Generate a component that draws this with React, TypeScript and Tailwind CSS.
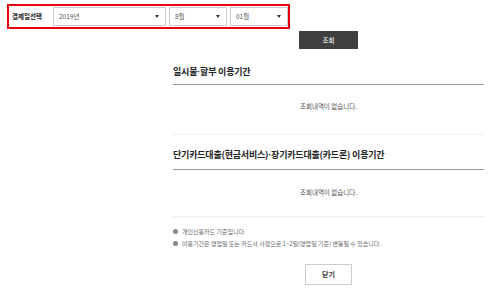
export default function App() {
    const font = { fontFamily: '"Noto Sans CJK KR", "Noto Sans", sans-serif' }
    const dot = { fontFamily: '"Liberation Sans", sans-serif' }
    return (
        <div className="w-[500px] h-[301px] bg-white overflow-hidden text-[#333]" style={font}>
            {/* 결제일 선택 */}
            <div className="pt-[4px] pl-[7px]">
                <div className="w-[283px] h-[25px] border-2 border-[#e60012] flex items-center">
                    <span className="w-[44px] pl-[3px] text-[6.5px] font-bold text-[#222] leading-none">결제일선택</span>
                    <div className="flex gap-[3px]">
                        <Select label="2019년" width="w-[113px]" />
                        <Select label="8월" width="w-[58px]" />
                        <Select label="01월" width="w-[58px]" />
                    </div>
                </div>
            </div>

            {/* 조회 결과 */}
            <div className="ml-[173px] w-[311px]">
                <div className="flex justify-center mt-[2px]">
                    <button className="w-[59px] h-[18px] bg-[#3f3f3f] text-white text-[6.5px] leading-none">조회</button>
                </div>

                <h3 className="mt-[16px] text-[9px] leading-[14px] font-bold tracking-[-0.2px] text-[#222] pb-[5px] border-b border-[#999]">
                    일시불<span style={dot}>·</span>할부 이용기간
                </h3>
                <div className="pt-[16px] pb-[23px] border-b border-[#eee] text-center text-[6.5px] leading-[10px] text-[#555]">
                    조회내역이 없습니다.
                </div>

                <h3 className="mt-[13px] text-[9px] leading-[14px] font-bold tracking-[-0.2px] text-[#222] pb-[7px] border-b border-[#999]">
                    단기카드대출(현금서비스)<span style={dot}>·</span>장기카드대출(카드론) 이용기간
                </h3>
                <div className="pt-[17px] pb-[19px] border-b border-[#eee] text-center text-[6.5px] leading-[10px] text-[#555]">
                    조회내역이 없습니다.
                </div>

                {/* 안내 */}
                <ul className="mt-[8px] text-[6px] text-[#666]">
                    <li className="flex items-center h-[12px] gap-[4px]">
                        <span className="w-[5px] h-[5px] rounded-full bg-[#888]" />
                        개인신용카드 기준입니다.
                    </li>
                    <li className="flex items-center h-[12px] gap-[4px]">
                        <span className="w-[5px] h-[5px] rounded-full bg-[#888]" />
                        이용기간은 영업일 또는 카드사 사정으로 1~2일(영업일 기준) 변동될 수 있습니다.
                    </li>
                </ul>

                <div className="flex justify-center mt-[15px]">
                    <button className="w-[47px] h-[21px] border border-[#ccc] bg-white text-[7px] font-bold text-[#333] leading-none">
                        닫기
                    </button>
                </div>
            </div>
        </div>
    )
}

function Select({ label, width }: { label: string; width: string }) {
    return (
        <div className={`${width} h-[19px] border border-[#ccc] bg-white flex items-center justify-between pl-[5px] pr-[6px]`}>
            <span className="text-[6.5px] text-[#555] leading-none">{label}</span>
            <span className="w-0 h-0 border-l-[2px] border-r-[2px] border-t-[3px] border-l-transparent border-r-transparent border-t-[#333]" />
        </div>
    )
}
